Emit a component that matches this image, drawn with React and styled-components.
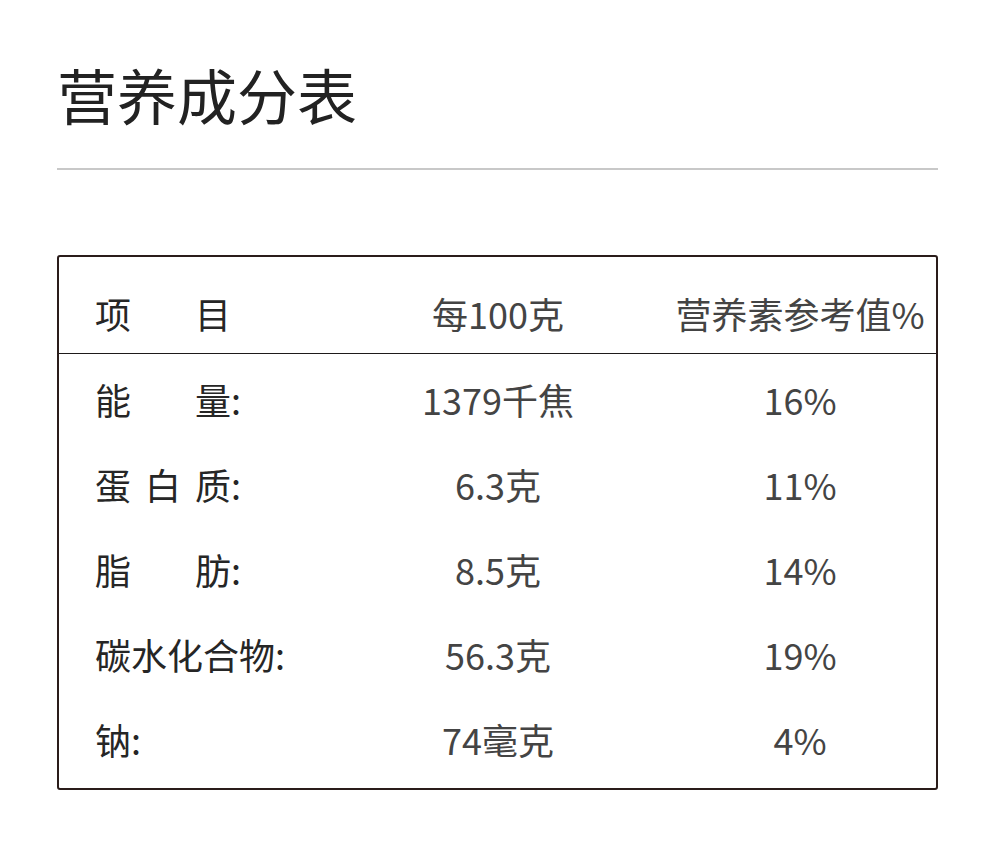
import styled, { createGlobalStyle } from "styled-components";

const GlobalStyle = createGlobalStyle`
  body {
    margin: 0;
    background: #fff;
    font-family: "Noto Sans CJK SC", "Noto Sans", sans-serif;
  }
`;

const Page = styled.div`
  box-sizing: border-box;
  width: 1000px;
  padding: 64px 62px 0 57px;
`;

const Title = styled.h1`
  margin: 0;
  font-size: 60px;
  line-height: 1;
  font-weight: 400;
  color: #222;
`;

const Divider = styled.hr`
  margin: 44px 0 0;
  border: none;
  height: 2px;
  background: #c8c8c8;
`;

const Table = styled.div`
  margin-top: 85px;
  border: 2px solid #2a1c1a;
  border-radius: 3px;
  font-size: 36px;
`;

const Row = styled.div`
  display: grid;
  grid-template-columns: 300px 278px 1fr;
  align-items: center;
  height: ${({ head }) => (head ? "97px" : "85px")};
  padding: ${({ head }) => (head ? "16px 0 0" : "0 0 3px")};
  box-sizing: border-box;
  border-bottom: ${({ head }) => (head ? "1px solid #1e1a1a" : "none")};
`;

const Body = styled.div`
  padding: 4px 0 5px;
`;

const Label = styled.div`
  display: flex;
  padding-left: 36px;
  color: #262626;
`;

const Spread = styled.span`
  display: flex;
  justify-content: space-between;
  width: ${({ w }) => w || "auto"};
`;

const Cell = styled.div`
  text-align: center;
  color: #444;
  padding-left: ${({ pad }) => pad || "0"};
`;

const rows = [
  { label: ["能", "量"], w: "136px", amount: "1379千焦", pct: "16%" },
  { label: ["蛋", "白", "质"], w: "136px", amount: "6.3克", pct: "11%" },
  { label: ["脂", "肪"], w: "136px", amount: "8.5克", pct: "14%" },
  { label: ["碳水化合物"], amount: "56.3克", pct: "19%" },
  { label: ["钠"], amount: "74毫克", pct: "4%" },
];

export default function App() {
  return (
    <Page>
      <GlobalStyle />
      <Title>营养成分表</Title>
      <Divider />
      <Table>
        <Row head>
          <Label>
            <Spread w="136px">
              <span>项</span>
              <span>目</span>
            </Spread>
          </Label>
          <Cell>每100克</Cell>
          <Cell pad="27px">营养素参考值%</Cell>
        </Row>
        <Body>
          {rows.map((r) => (
            <Row key={r.amount}>
              <Label>
                <Spread w={r.w}>
                  {r.label.map((c) => (
                    <span key={c}>{c}</span>
                  ))}
                </Spread>
                <span>:</span>
              </Label>
              <Cell>{r.amount}</Cell>
              <Cell pad="27px">{r.pct}</Cell>
            </Row>
          ))}
        </Body>
      </Table>
    </Page>
  );
}
